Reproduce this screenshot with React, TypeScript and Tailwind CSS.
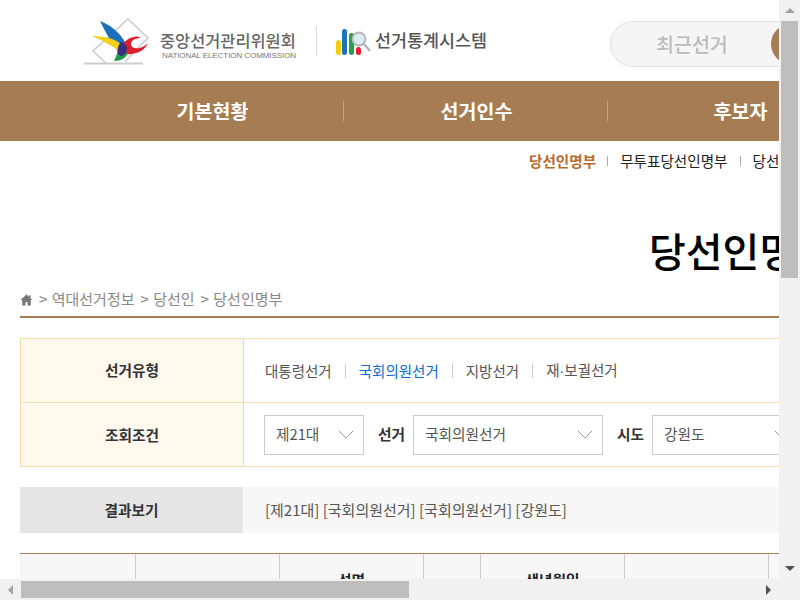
import React from 'react';

const kr = 'font-["Noto_Sans_CJK_KR","Noto_Sans",sans-serif]';

const Chevron = () => (
  <svg width="16" height="9" viewBox="0 0 16 9" fill="none" stroke="#999" strokeWidth="1">
    <path d="M1 1l7 7 7-7" />
  </svg>
);

const Select = ({ label, className }: { label: string; className: string }) => (
  <div className={`flex h-10 shrink-0 items-center justify-between border border-[#ccc] pl-[11px] pr-[9px] text-[14.7px] text-[#555] ${className}`}>
    <span>{label}</span>
    <Chevron />
  </div>
);

const Sep = ({ className }: { className: string }) => <span className={`w-px shrink-0 ${className}`} />;

const ElectionLogo = () => (
  <svg width="76" height="48" viewBox="84 16 76 48" className="shrink-0">
    <path d="M84 62.5h59" stroke="#ccc" strokeWidth="2" />
    <path d="M106 62L93 50 128 18l20 19-8 8-15 16" fill="none" stroke="#ccc" strokeWidth="1.6" />
    <path d="M100 20c11 4 20 12 25 21l-1 9c-2 3-5 2-7-1-6-8-12-19-17-29z" fill="#1c6fb8" />
    <path d="M92 35c10 0 22 2 29 8l-1 8c-9-7-18-12-28-16z" fill="#f7d117" />
    <path d="M122 48c0-6 5-11 12-12 3-1 5 0 7 1-5 0-10 2-10 6 0 4 5 5 9 4 3-1 6-3 8-5-2 5-7 9-12 10-6 2-12 2-14-4z" fill="#e21d2c" />
    <path d="M118 46c2 3 8 6 10 6-2 5-7 8-14 8 2-4 4-9 4-14z" fill="#1f9a48" />
    <path d="M121 41c4 1 7 4 6 8-1 4-4 6-6 6-3-1-4-4-3-7 0-3 1-5 3-7z" fill="#3a2f7c" />
  </svg>
);

const StatsLogo = () => (
  <svg width="36" height="30" viewBox="336 28 36 30" className="shrink-0">
    <rect x="336" y="42" width="5" height="15" rx="2.5" fill="#f5cf0e" />
    <rect x="342" y="31" width="5" height="26" rx="2.5" fill="#1b74bb" />
    <rect x="349" y="35" width="5" height="22" rx="2.5" fill="#2a9d4c" />
    <rect x="356" y="49" width="5" height="8" rx="2.5" fill="#e2202c" />
    <circle cx="359" cy="41" r="6.5" fill="#dcebf6" stroke="#b5b5b5" strokeWidth="1.8" />
    <path d="M364 46l6 7" stroke="#b5b5b5" strokeWidth="2.4" />
  </svg>
);

const HeaderCell = ({ width, children, last }: { width: string; children?: React.ReactNode; last?: boolean }) => (
  <div className={`flex shrink-0 justify-center pt-[15px] text-[14.7px] font-bold text-[#222] ${width} ${last ? '' : 'border-r border-[#ccc]'}`}>
    {children}
  </div>
);

export default function App() {
  return (
    <div className={`grid h-[600px] w-[800px] grid-cols-[779px_21px] grid-rows-[579px_21px] overflow-hidden bg-white ${kr}`}>
      <div className="overflow-hidden">
        <div className="w-[1482px]">
          {/* 상단 로고 */}
          <header className="flex h-[81px] items-center pl-[84px]">
            <ElectionLogo />
            <div className="mt-[10px] flex w-[137px] shrink-0 flex-col">
              <span className="text-[16.4px] leading-5 font-medium whitespace-nowrap text-[#666]">중앙선거관리위원회</span>
              <span className="mt-px ml-[2px] font-['Liberation_Sans',sans-serif] text-[8px] leading-[10px] tracking-[-0.07px] whitespace-nowrap text-[#777]">NATIONAL ELECTION COMMISSION</span>
            </div>
            <Sep className="mx-[19px] h-[30px] bg-[#ddd]" />
            <StatsLogo />
            <span className="ml-[3px] text-[17.4px] font-medium whitespace-nowrap text-[#555]">선거통계시스템</span>
            <div className="mt-[7px] ml-[123px] flex h-[46px] w-[230px] shrink-0 items-center rounded-full border border-[#e3e3e3] bg-[#f5f5f5] pl-[45px] text-[19.5px] font-medium text-[#bbb]">
              <span className="w-[115px]">최근선거</span>
              <span className="h-10 w-10 rounded-full bg-[#a67c52]" />
            </div>
          </header>

          {/* 메뉴 */}
          <nav className="flex h-[60px] items-center bg-[#a67c52] pb-px pl-[80px] text-[19.5px] font-bold text-white">
            {['기본현황', '선거인수', '후보자', '투표현황'].map((item, idx) => (
              <div key={item} className={`flex h-5 w-[264px] shrink-0 items-center justify-center pl-[2px] ${idx < 3 ? 'border-r border-[#c4a483]' : ''}`}>
                {item}
              </div>
            ))}
          </nav>

          <div className="flex h-10 items-center pl-[529px] text-[14.6px] whitespace-nowrap text-[#222]">
            <span className="font-bold text-[#b86a2b]">당선인명부</span>
            <Sep className="mr-3 ml-[11px] h-[10px] bg-[#aaa]" />
            <span>무투표당선인명부</span>
            <Sep className="mx-3 h-[10px] bg-[#aaa]" />
            <span>당선인통계</span>
          </div>

          <h1 className="mt-[39px] text-center text-[40px] leading-[60px] font-medium text-black">당선인명부</h1>

          <div className="mx-5 mt-[6px] flex h-[32px] items-start border-b-2 border-[#a67c52] pt-[2px] text-[15px] whitespace-nowrap text-[#888]">
            <svg width="13" height="12" viewBox="0 0 13 12" className="mt-[6px] mr-[6px] fill-[#777]">
              <path d="M6.5 0.5L0.5 6h1.7v5.5h3.3V8h2v3.5h3.3V6h1.7L10.5 4.2V1.2H9v1.6z" />
            </svg>
            <span>
              &gt; <span className="ml-px">역대선거정보</span>
            </span>
            <span className="ml-[6px]">
              &gt; <span className="ml-px">당선인</span>
            </span>
            <span className="ml-[6px]">
              &gt; <span className="ml-px">당선인명부</span>
            </span>
          </div>

          {/* 조회 조건 */}
          <div className="mx-5 mt-5 border border-[#f5dcb0]">
            <div className="flex h-[64px] border-b border-[#f5dcb0]">
              <div className="flex w-[223px] shrink-0 items-center justify-center border-r border-[#f5dcb0] bg-[#fff8ec] text-[14.7px] font-bold text-[#333]">선거유형</div>
              <div className="flex items-center pl-[21px] text-[14.5px] whitespace-nowrap text-[#555]">
                <span>대통령선거</span>
                <Sep className="mx-[13px] h-3.5 bg-[#ccc]" />
                <span className="text-[#0a6cce]">국회의원선거</span>
                <Sep className="mx-[13px] h-3.5 bg-[#ccc]" />
                <span>지방선거</span>
                <Sep className="mx-[13px] h-3.5 bg-[#ccc]" />
                <span>
                  재<span className="font-['Liberation_Sans',sans-serif]">·</span>보궐선거
                </span>
              </div>
            </div>
            <div className="flex h-[63px]">
              <div className="flex w-[223px] shrink-0 items-center justify-center border-r border-[#f5dcb0] bg-[#fff8ec] pt-px text-[14.7px] font-bold text-[#333]">조회조건</div>
              <div className="flex items-center pl-5 text-[14.7px] whitespace-nowrap">
                <Select label="제21대" className="w-[100px]" />
                <span className="mr-[8px] ml-[14px] w-[27px] font-bold text-[#333]">선거</span>
                <Select label="국회의원선거" className="w-[190px]" />
                <span className="mr-[8px] ml-[14px] w-[27px] font-bold text-[#333]">시도</span>
                <Select label="강원도" className="w-[148px]" />
              </div>
            </div>
          </div>

          <div className="mx-5 mt-5 flex h-[46px] bg-[#f7f7f7] text-[14.7px]">
            <div className="flex w-[223px] shrink-0 items-center justify-center bg-[#e5e5e5] font-bold text-[#333]">결과보기</div>
            <div className="flex items-center pl-[22px] text-[15px] whitespace-nowrap text-[#555]">[제21대] [국회의원선거] [국회의원선거] [강원도]</div>
          </div>

          <div className="mx-5 mt-5 flex h-[60px] border-t border-[#a67c52] bg-[#f7f7f7]">
            <HeaderCell width="w-[116px]" />
            <HeaderCell width="w-[144px]" />
            <HeaderCell width="w-[144px]">성명</HeaderCell>
            <HeaderCell width="w-[57px]" />
            <HeaderCell width="w-[144px]">생년월일</HeaderCell>
            <HeaderCell width="w-[144px]" />
            <HeaderCell width="w-[144px]" last />
          </div>
        </div>
      </div>

      {/* 세로 스크롤바 */}
      <div className="flex flex-col items-center bg-[#f1f1f1]">
        <div className="flex h-[21px] items-center justify-center">
          <span className="border-x-[5px] border-b-[5px] border-x-transparent border-b-[#a3a3a3]" />
        </div>
        <div className="h-[257px] w-[17px] bg-[#bdbdbd]" />
        <div className="flex-1" />
        <div className="flex h-[21px] items-center justify-center">
          <span className="border-x-[5px] border-t-[5px] border-x-transparent border-t-[#505050]" />
        </div>
      </div>

      {/* 가로 스크롤바 */}
      <div className="flex items-center bg-[#f1f1f1]">
        <div className="flex h-[21px] w-[21px] items-center justify-center">
          <span className="border-y-[5px] border-r-[5px] border-y-transparent border-r-[#a3a3a3]" />
        </div>
        <div className="h-[17px] w-[388px] bg-[#bdbdbd]" />
        <div className="flex-1" />
        <div className="flex h-[21px] w-[21px] items-center justify-center">
          <span className="border-y-[5px] border-l-[5px] border-y-transparent border-l-[#505050]" />
        </div>
      </div>
      <div className="bg-[#f1f1f1]" />
    </div>
  );
}
